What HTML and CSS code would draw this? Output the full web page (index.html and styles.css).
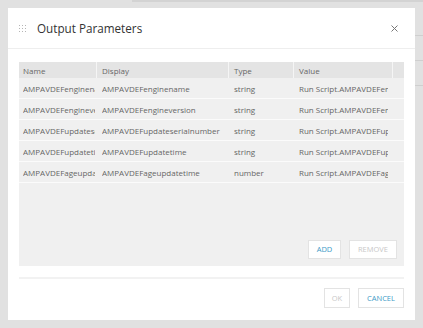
FILE: index.html
```html
<!DOCTYPE html>
<html>
<head>
<meta charset="utf-8">
<link rel="stylesheet" href="styles.css">
</head>
<body>
<div class="backdrop">
  <div class="bg-top"></div>
  <div class="bg-right"><span></span><span></span><span></span></div>
  <div class="modal">
    <div class="modal-header">
      <svg class="drag" width="7" height="7" viewBox="0 0 7 7">
        <g fill="#b5b5b5">
          <rect x="0" y="0" width="1" height="1"/><rect x="3" y="0" width="1" height="1"/><rect x="6" y="0" width="1" height="1"/>
          <rect x="0" y="3" width="1" height="1"/><rect x="3" y="3" width="1" height="1"/><rect x="6" y="3" width="1" height="1"/>
          <rect x="0" y="6" width="1" height="1"/><rect x="3" y="6" width="1" height="1"/><rect x="6" y="6" width="1" height="1"/>
        </g>
      </svg>
      <div class="title">Output Parameters</div>
      <svg class="close" width="7" height="7" viewBox="0 0 7 7">
        <path d="M0.5 0.5 L6.5 6.5 M6.5 0.5 L0.5 6.5" stroke="#777" stroke-width="1" fill="none"/>
      </svg>
    </div>
    <div class="modal-body">
      <div class="grid">
        <div class="row head">
          <div class="c c-name">Name</div>
          <div class="c c-disp">Display</div>
          <div class="c c-type">Type</div>
          <div class="c c-val">Value</div>
          <div class="c c-end"></div>
        </div>
        <div class="row">
          <div class="c c-name"><span>AMPAVDEFenginename</span></div>
          <div class="c c-disp"><span>AMPAVDEFenginename</span></div>
          <div class="c c-type"><span>string</span></div>
          <div class="c c-val"><span>Run Script.AMPAVDEFenginename</span></div>
        </div>
        <div class="row">
          <div class="c c-name"><span>AMPAVDEFengineversion</span></div>
          <div class="c c-disp"><span>AMPAVDEFengineversion</span></div>
          <div class="c c-type"><span>string</span></div>
          <div class="c c-val"><span>Run Script.AMPAVDEFengineversion</span></div>
        </div>
        <div class="row">
          <div class="c c-name"><span>AMPAVDEFupdateserialnumber</span></div>
          <div class="c c-disp"><span>AMPAVDEFupdateserialnumber</span></div>
          <div class="c c-type"><span>string</span></div>
          <div class="c c-val"><span>Run Script.AMPAVDEFupdateserialnumber</span></div>
        </div>
        <div class="row">
          <div class="c c-name"><span>AMPAVDEFupdatetime</span></div>
          <div class="c c-disp"><span>AMPAVDEFupdatetime</span></div>
          <div class="c c-type"><span>string</span></div>
          <div class="c c-val"><span>Run Script.AMPAVDEFupdatetime</span></div>
        </div>
        <div class="row">
          <div class="c c-name"><span>AMPAVDEFageupdatetime</span></div>
          <div class="c c-disp"><span>AMPAVDEFageupdatetime</span></div>
          <div class="c c-type"><span>number</span></div>
          <div class="c c-val"><span>Run Script.AMPAVDEFageupdatetime</span></div>
        </div>
        <div class="grid-actions">
          <button class="btn btn-primary">ADD</button>
          <button class="btn btn-disabled btn-wide">REMOVE</button>
        </div>
      </div>
    </div>
    <div class="modal-footer">
      <button class="btn btn-disabled btn-ok">OK</button>
      <button class="btn btn-primary btn-cancel">CANCEL</button>
    </div>
  </div>
</div>
</body>
</html>
```

FILE: styles.css
```css
html, body {
  margin: 0;
  padding: 0;
}
body {
  width: 423px;
  height: 328px;
  overflow: hidden;
  background: #e1e1e1;
  font-family: "Open Sans", "Liberation Sans", sans-serif;
}
.backdrop {
  position: relative;
  box-sizing: border-box;
  width: 423px;
  height: 328px;
  padding: 8px;
}
.bg-top {
  position: absolute;
  left: 132px;
  top: 0;
  right: 0;
  height: 2px;
  background: #d3d3d3;
}
.bg-right {
  position: absolute;
  left: 415px;
  top: 35px;
  right: 0;
  display: flex;
  flex-direction: column;
  gap: 24px;
}
.bg-right span {
  display: block;
  height: 1px;
  background: #cfcfcf;
}
.modal {
  position: relative;
  width: 407px;
  height: 312px;
  background: #fff;
  display: flex;
  flex-direction: column;
}
.modal-header {
  box-sizing: border-box;
  height: 41px;
  border-bottom: 1px solid #eeeeee;
  display: flex;
  align-items: center;
  padding: 0 0 0 11px;
}
.drag {
  display: block;
  margin-right: 11px;
}
.title {
  flex: 1;
  font-size: 11.7px;
  color: #333;
  line-height: 16px;
}
.close {
  display: block;
  margin-right: 17px;
}
.modal-body {
  padding: 13px 11px 0 11px;
}
.grid {
  height: 204px;
  background: #f0f0f0;
  display: flex;
  flex-direction: column;
}
.row {
  display: flex;
  height: 21px;
  border-bottom: 1px solid #fbfbfb;
  box-sizing: border-box;
  align-items: center;
  font-size: 8px;
  color: #666;
}
.row.head {
  height: 16px;
  background: #e4e4e4;
  border-bottom: none;
  align-items: stretch;
}
.row.head .c {
  display: flex;
  align-items: center;
  border-right: 1px solid #f5f5f5;
}
.row.head .c-end {
  border-right: none;
}
.c {
  box-sizing: border-box;
  white-space: nowrap;
  overflow: hidden;
  padding-left: 4px;
  padding-right: 2px;
}
.c span {
  display: block;
  overflow: hidden;
}
.c-name { width: 78px; }
.c-disp { width: 132px; padding-left: 5px; }
.c-type { width: 65px; padding-left: 5px; }
.c-val { width: 99px; padding-left: 5px; padding-right: 5px; }
.c-end { width: 11px; }
.grid-actions {
  margin-top: auto;
  display: flex;
  justify-content: flex-end;
  gap: 8px;
  padding: 0 7px 7px 0;
}
.btn {
  box-sizing: border-box;
  height: 19px;
  width: 33px;
  padding: 0;
  background: #fff;
  border: 1px solid #e3e3e3;
  font-family: "Open Sans", "Liberation Sans", sans-serif;
  font-size: 7.5px;
  line-height: 17px;
  text-align: center;
}
.btn-wide { width: 48px; }
.btn-primary { color: #3e9bc7; }
.btn-disabled { color: #c8c8c8; }
.modal-footer {
  margin: 11px 11px 0 11px;
  border-top: 2px solid #f2f2f2;
  display: flex;
  justify-content: flex-end;
  gap: 8px;
  padding-top: 9px;
}
.btn-ok { width: 26px; height: 20px; }
.btn-cancel { width: 46px; height: 20px; }
```
